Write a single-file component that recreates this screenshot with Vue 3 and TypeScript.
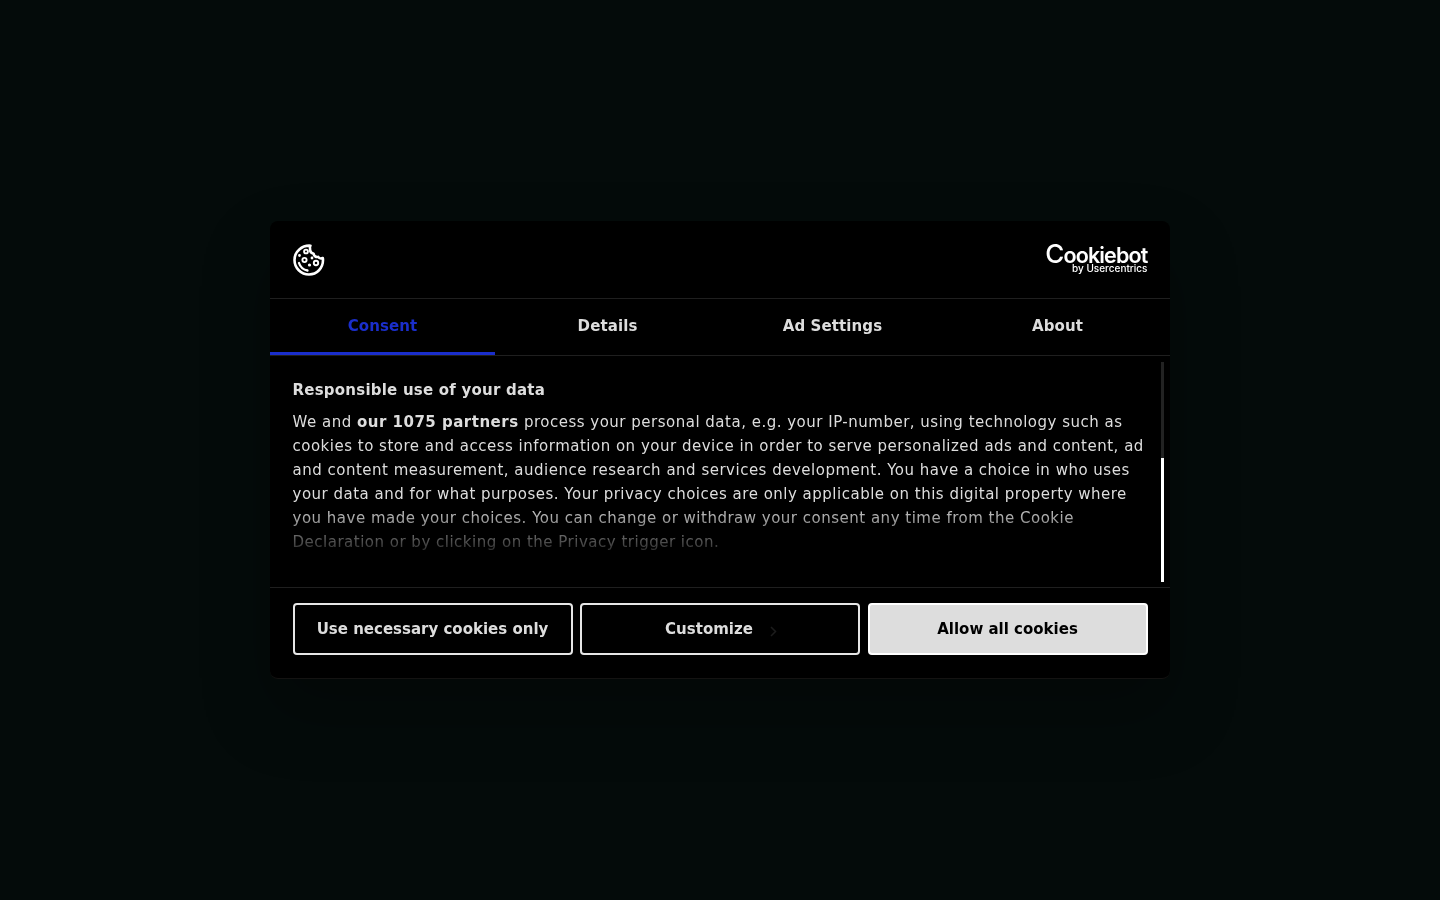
<script setup lang="ts">
const tabs: string[] = ['Consent', 'Details', 'Ad Settings', 'About']
</script>

<template>
  <div class="page">
    <div class="dialog">
      <header class="head">
        <svg class="cookie" width="32" height="32" viewBox="0 0 32 32" fill="none" stroke="#fff" stroke-width="2.600" stroke-linecap="round" stroke-linejoin="round">
          <path d="M17.500 1.700C9 1.100 1.500 7.500 1.500 16c0 8 6.500 14.500 14.500 14.500S30 24 30 16c0-.8-.1-1.400-.2-2-1.500 .8-3.700 .4-4.600-1.100-2.200 .6-4.300-.9-4.500-3.100-2.200-.5-3.600-2-3.600-4 0-1.700 0-3-.6-4.100z" />
          <circle cx="13" cy="7.500" r="1.900" stroke-width="1.900" />
          <circle cx="11.500" cy="16" r="2.100" stroke-width="1.900" />
          <circle cx="23" cy="19" r="2.200" stroke-width="1.900" />
          <path d="M6 19c1.200 3.800 4.500 6.800 8.500 7.500" stroke-width="2.300" />
          <circle cx="6.500" cy="11.500" r=".7" stroke-width="1.400" />
          <circle cx="19" cy="14" r=".7" stroke-width="1.400" />
          <circle cx="16.500" cy="21" r=".8" stroke-width="1.600" />
        </svg>
        <div class="brand">
          <span class="brand-name"><span class="brand-c">C</span>ookiebot</span>
          <span class="brand-sub">by Usercentrics</span>
        </div>
      </header>

      <nav class="tabs">
        <button v-for="(tab, i) in tabs" :key="tab" class="tab" :class="{ active: i === 0 }">{{ tab }}</button>
      </nav>

      <section class="body">
        <div class="copy">
          <h2>Responsible use of your data</h2>
          <p>We and <strong>our 1075 partners</strong> process your personal data, e.g. your IP-number, using technology such as cookies to store and access information on your device in order to serve personalized ads and content, ad and content measurement, audience research and services development. You have a choice in who uses your data and for what purposes. Your privacy choices are only applicable on this digital property where you have made your choices. You can change or withdraw your consent any time from the Cookie Declaration or by clicking on the Privacy trigger icon.</p>
        </div>
        <div class="fade"></div>
        <div class="track"><div class="thumb"></div></div>
      </section>

      <footer class="foot">
        <button class="btn">Use necessary cookies only</button>
        <button class="btn">
          <span>Customize</span>
          <svg class="chev" width="7" height="11" viewBox="0 0 7 11" fill="none" stroke="#1c1c1c" stroke-width="1.500"><path d="M1 1l4.500 4.500L1 10" /></svg>
        </button>
        <button class="btn solid">Allow all cookies</button>
      </footer>
    </div>
  </div>
</template>

<style>
html, body { margin: 0; background: #040b0a; }
</style>

<style scoped>
.page {
  width: 1440px;
  height: 900px;
  background: #040b0a;
  display: flex;
  justify-content: center;
  padding-top: 221px;
  box-sizing: border-box;
  font-family: "DejaVu Sans", sans-serif;
  color: #ddd;
}
.dialog {
  width: 900px;
  height: 458px;
  background: #000;
  border-radius: 8px;
  box-shadow: 0 32px 68px rgba(0, 0, 0, 0.3);
  display: flex;
  flex-direction: column;
  will-change: transform;
}
.head {
  height: 77px;
  flex: none;
  display: flex;
  align-items: center;
  justify-content: space-between;
  padding: 0 22.500px;
  border-bottom: 1px solid #1f1f1f;
}
.brand {
  display: flex;
  flex-direction: column;
  align-items: flex-end;
  color: #fff;
  font-family: Inter, sans-serif;
  margin-top: -1px;
}
.brand-name {
  font-size: 21.500px;
  line-height: 18px;
  font-weight: 600;
  letter-spacing: -0.85px;
}
.brand-c {
  font-size: 26px;
  line-height: 18px;
  font-weight: 500;
}
.brand-sub {
  font-size: 10px;
  line-height: 9px;
  font-weight: 500;
}
.tabs {
  height: 57px;
  flex: none;
  display: grid;
  grid-template-columns: repeat(4, 1fr);
  border-bottom: 1px solid #1f1f1f;
  box-sizing: border-box;
}
.tab {
  background: none;
  border: 0;
  border-bottom: 3px solid transparent;
  padding: 1px 0 0;
  font: 700 15px/24px "DejaVu Sans", sans-serif;
  letter-spacing: 0.1px;
  color: #ddd;
}
.tab.active {
  color: #1a2ecb;
  border-bottom-color: #1a2ecb;
}
.body {
  position: relative;
  height: 232px;
  flex: none;
  box-sizing: border-box;
  padding: 22px 22.500px 0;
  overflow: hidden;
  border-bottom: 1px solid #1f1f1f;
}
.copy h2 {
  margin: 0 0 8px;
  font: 700 15px/24px "DejaVu Sans", sans-serif;
  letter-spacing: 0.225px;
}
.copy p {
  margin: 0;
  font: 400 15px/24px "DejaVu Sans", sans-serif;
  letter-spacing: 0.5px;
}
.copy strong { font-weight: 700; }
.fade {
  position: absolute;
  left: 0;
  right: 0;
  bottom: 24px;
  height: 60px;
  pointer-events: none;
  background: linear-gradient(to bottom, rgba(0, 0, 0, 0), rgba(0, 0, 0, 1));
}
.track {
  position: absolute;
  top: 6px;
  left: 891px;
  width: 3px;
  height: 220px;
  background: #222;
  display: flex;
  align-items: flex-end;
}
.thumb {
  width: 100%;
  height: 124px;
  background: #fff;
}
.foot {
  flex: 1;
  display: grid;
  grid-template-columns: repeat(3, 1fr);
  gap: 7.500px;
  align-content: start;
  padding: 15px 22.500px 0;
  border-bottom: 1px solid #141312;
  border-radius: 0 0 8px 8px;
}
.btn {
  height: 52px;
  box-sizing: border-box;
  background: #000;
  border: 2px solid #e6e6e6;
  border-radius: 4px;
  color: #ddd;
  font: 700 15px/24px "DejaVu Sans", sans-serif;
  display: flex;
  align-items: center;
  justify-content: center;
  gap: 17px;
  padding: 0;
}
.chev { margin: 5px -2px 0 0; }
.btn.solid {
  background: #ddd;
  border-color: #fff;
  color: #000;
}
</style>
